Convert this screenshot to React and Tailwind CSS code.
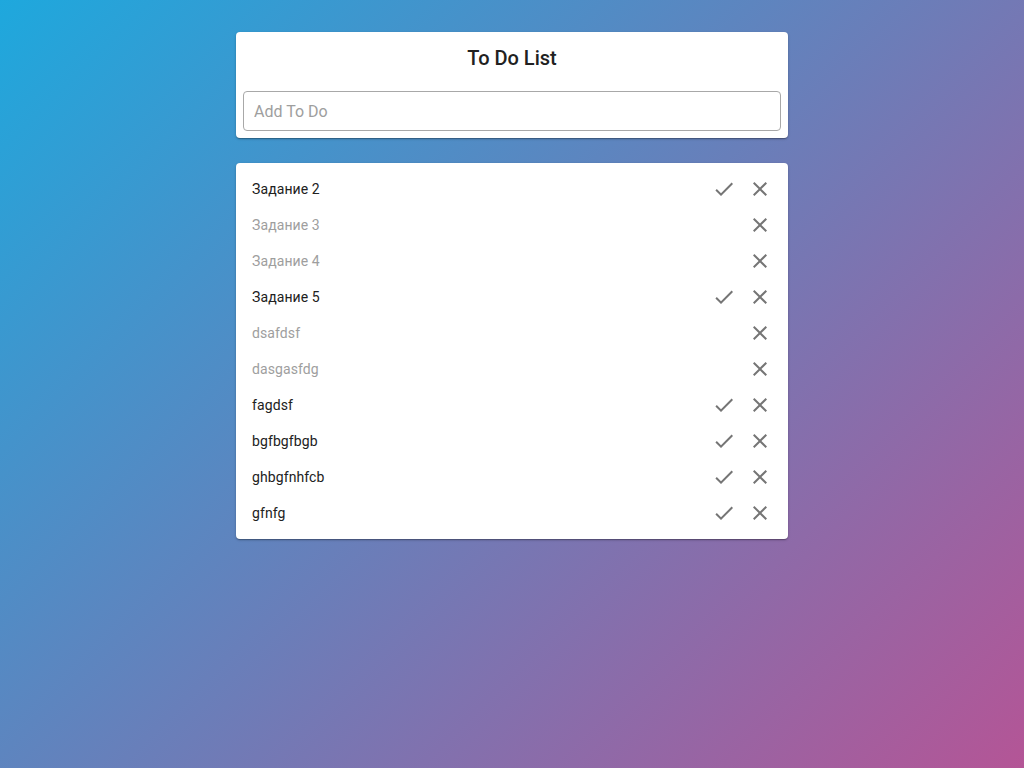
import React, { useState } from "react";

const initialTodos = [
  { id: 1, text: "Задание 2", done: false },
  { id: 2, text: "Задание 3", done: true },
  { id: 3, text: "Задание 4", done: true },
  { id: 4, text: "Задание 5", done: false },
  { id: 5, text: "dsafdsf", done: true },
  { id: 6, text: "dasgasfdg", done: true },
  { id: 7, text: "fagdsf", done: false },
  { id: 8, text: "bgfbgfbgb", done: false },
  { id: 9, text: "ghbgfnhfcb", done: false },
  { id: 10, text: "gfnfg", done: false },
];

const CheckIcon = () => (
  <svg width="24" height="24" viewBox="0 0 24 24" fill="currentColor">
    <path d="M9 16.17L4.83 12l-1.42 1.41L9 19 21 7l-1.41-1.41z" />
  </svg>
);

const CloseIcon = () => (
  <svg width="24" height="24" viewBox="0 0 24 24" fill="currentColor">
    <path d="M19 6.41L17.59 5 12 10.59 6.41 5 5 6.41 10.59 12 5 17.59 6.41 19 12 13.41 17.59 19 19 17.59 13.41 12z" />
  </svg>
);

const App = () => {
  const [todos, setTodos] = useState(initialTodos);
  const [value, setValue] = useState("");

  const addTodo = (e) => {
    e.preventDefault();
    if (!value.trim()) return;
    setTodos([...todos, { id: Date.now(), text: value, done: false }]);
    setValue("");
  };

  const completeTodo = (id) => {
    setTodos(todos.map((t) => (t.id === id ? { ...t, done: true } : t)));
  };

  const removeTodo = (id) => {
    setTodos(todos.filter((t) => t.id !== id));
  };

  return (
    <div
      className="min-h-screen w-full bg-[linear-gradient(135deg,#1ea8dd,#b45596)] pt-8"
      style={{ fontFamily: "Roboto, 'Noto Sans', sans-serif" }}
    >
      <div className="mx-auto w-[552px]">
        <form
          onSubmit={addTodo}
          className="bg-white rounded shadow-[0_1px_3px_rgba(0,0,0,0.2),0_1px_1px_rgba(0,0,0,0.14),0_2px_1px_-1px_rgba(0,0,0,0.12)] px-[7px] pb-[7px]"
        >
          <h1 className="text-center text-[20px] font-medium text-[#212121] pt-[12px] pb-[19px] leading-[28px]">
            To Do List
          </h1>
          <input
            value={value}
            onChange={(e) => setValue(e.target.value)}
            placeholder="Add To Do"
            className="block w-full h-10 rounded border border-[#a8a8a8] px-[10px] text-[16px] text-[#212121] placeholder:text-[#9e9e9e] outline-none"
          />
        </form>

        <ul className="mt-[25px] bg-white rounded py-2 shadow-[0_1px_3px_rgba(0,0,0,0.2),0_1px_1px_rgba(0,0,0,0.14),0_2px_1px_-1px_rgba(0,0,0,0.12)]">
          {todos.map((todo) => (
            <li key={todo.id} className="flex items-center h-9 pl-4 pr-[10px]">
              <span
                className={
                  todo.done
                    ? "flex-1 text-[14px] text-[#9e9e9e] tracking-[0.1px]"
                    : "flex-1 text-[14px] text-[#212121] tracking-[0.1px]"
                }
              >
                {todo.text}
              </span>
              {!todo.done && (
                <button
                  type="button"
                  onClick={() => completeTodo(todo.id)}
                  className="w-9 h-9 flex items-center justify-center text-[#757575]"
                >
                  <CheckIcon />
                </button>
              )}
              <button
                type="button"
                onClick={() => removeTodo(todo.id)}
                className="w-9 h-9 flex items-center justify-center text-[#757575]"
              >
                <CloseIcon />
              </button>
            </li>
          ))}
        </ul>
      </div>
    </div>
  );
};

export default App;
